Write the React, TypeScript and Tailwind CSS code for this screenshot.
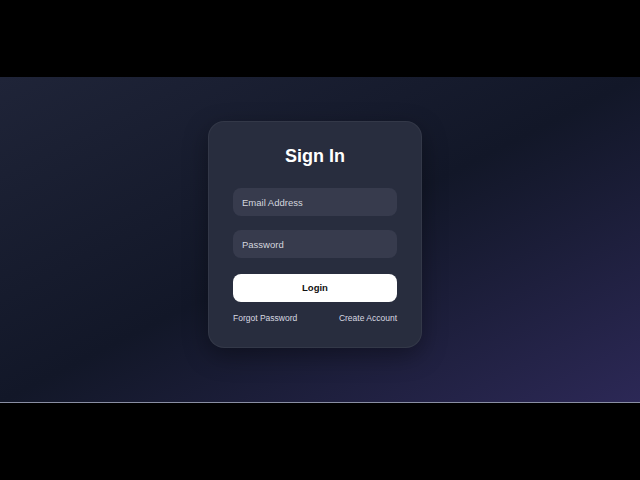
export default function App() {
  return (
    <div className="min-h-screen bg-black flex flex-col" style={{ fontFamily: '"Liberation Sans", Arial, sans-serif' }}>
      <div className="h-[77px] bg-black" />
      <section className="h-[326px] border-b border-[#8a8fa3] bg-gradient-to-br from-[#1f2438] via-[#121728] to-[#2c2856] flex items-start justify-center pt-[44px] pr-[10px]">
        <div className="w-[214px] h-[227px] rounded-2xl bg-[#282d3e] border border-white/5 shadow-[0_8px_24px_rgba(0,0,0,0.35)] px-6 pt-[22px] flex flex-col">
          <h1 className="text-center text-white font-bold text-[18px] leading-6 mb-5">Sign In</h1>
          <input
            placeholder="Email Address"
            className="h-7 w-full rounded-lg bg-[#373b4d] px-[9px] text-[9.5px] text-white placeholder:text-[#d4d6de] outline-none mb-[14px]"
          />
          <input
            type="password"
            placeholder="Password"
            className="h-7 w-full rounded-lg bg-[#373b4d] px-[9px] text-[9.5px] text-white placeholder:text-[#d4d6de] outline-none mb-4"
          />
          <button className="h-7 w-full rounded-lg bg-white text-[9.5px] font-bold text-[#111]">Login</button>
          <div className="mt-[10px] flex justify-between text-[8.5px] text-[#d8dae2]">
            <a href="#">Forgot Password</a>
            <a href="#">Create Account</a>
          </div>
        </div>
      </section>
      <div className="flex-1 bg-black" />
    </div>
  );
}
